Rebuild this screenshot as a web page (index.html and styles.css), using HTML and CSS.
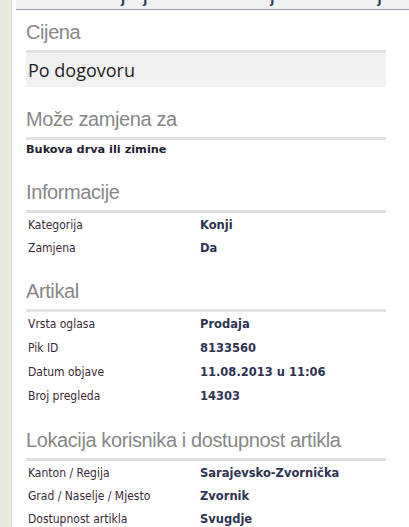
FILE: index.html
```html
<!DOCTYPE html>
<html lang="bs">
<head>
    <meta charset="UTF-8">
    <meta name="viewport" content="width=device-width, initial-scale=1.0">
    <title>Oglas - Konji</title>
    <link rel="stylesheet" href="styles.css">
</head>
<body>
    <div class="side"></div>
    <div class="main">
        <div class="top-bar">
            <span class="cut" style="margin-left: 105px">j</span>
            <span class="cut" style="margin-left: 18px">j</span>
            <span class="cut" style="margin-left: 123px">j</span>
            <span class="cut" style="margin-left: 103px">j</span>
        </div>

        <div class="section">
            <h2>Cijena</h2>
            <div class="price">Po dogovoru</div>
        </div>

        <div class="section">
            <h2>Može zamjena za</h2>
            <p class="swap">Bukova drva ili zimine</p>
        </div>

        <div class="section">
            <h2>Informacije</h2>
            <table class="details">
                <tr><td>Kategorija</td><td>Konji</td></tr>
                <tr><td>Zamjena</td><td>Da</td></tr>
            </table>
        </div>

        <div class="section">
            <h2>Artikal</h2>
            <table class="details wide">
                <tr><td>Vrsta oglasa</td><td>Prodaja</td></tr>
                <tr><td>Pik ID</td><td>8133560</td></tr>
                <tr><td>Datum objave</td><td>11.08.2013 u 11:06</td></tr>
                <tr><td>Broj pregleda</td><td>14303</td></tr>
            </table>
        </div>

        <div class="section">
            <h2>Lokacija korisnika i dostupnost artikla</h2>
            <table class="details">
                <tr><td>Kanton / Regija</td><td>Sarajevsko-Zvornička</td></tr>
                <tr><td>Grad / Naselje / Mjesto</td><td>Zvornik</td></tr>
                <tr><td>Dostupnost artikla</td><td>Svugdje</td></tr>
            </table>
        </div>
    </div>
</body>
</html>
```

FILE: styles.css
```css
* {
    margin: 0;
    padding: 0;
    box-sizing: border-box;
}

body {
    display: flex;
    min-height: 100vh;
    background-color: #ffffff;
    font-family: 'DejaVu Sans Condensed', 'DejaVu Sans', sans-serif;
    color: #333;
    overflow: hidden;
}

.side {
    width: 12px;
    flex-shrink: 0;
    background-color: #eae9e0;
    border-right: 1px solid #dddcd2;
}

.main {
    flex: 1;
    margin-left: 4px;
}

.top-bar {
    display: flex;
    height: 10px;
    background-color: #f0f1f3;
    border-bottom: 1px solid #9a9ea4;
    overflow: hidden;
}

.cut {
    font-family: 'DejaVu Sans', sans-serif;
    font-weight: bold;
    font-size: 12px;
    line-height: 12px;
    color: #2c3a5a;
    margin-top: -7px;
}

.section {
    width: 360px;
    margin: 20px 0 0 10px;
}

.top-bar + .section {
    margin-top: 10px;
}

h2 {
    font-family: 'Liberation Sans', Arial, sans-serif;
    font-size: 20px;
    font-weight: normal;
    line-height: 24px;
    letter-spacing: -0.4px;
    color: #878787;
    padding-bottom: 6px;
    border-bottom: 3px solid #e1e1e1;
}

.price {
    height: 34px;
    padding-left: 2px;
    background-color: #f1f1f1;
    font-family: 'Open Sans', 'Noto Sans', sans-serif;
    font-size: 18px;
    line-height: 34px;
    color: #1e1e1e;
}

.swap {
    font-family: 'DejaVu Sans', sans-serif;
    font-size: 11.3px;
    font-weight: bold;
    line-height: 20px;
    color: #1f2230;
}

.details {
    border-collapse: collapse;
    font-size: 12px;
}

.details td {
    height: 23px;
    padding: 0 2px;
    vertical-align: middle;
}

.wide td {
    height: 24px;
}

.details td:first-child {
    width: 172px;
    color: #3a2a36;
}

.details td:last-child {
    font-family: 'DejaVu Sans', sans-serif;
    font-size: 11.5px;
    font-weight: bold;
    color: #2e3350;
}
```
